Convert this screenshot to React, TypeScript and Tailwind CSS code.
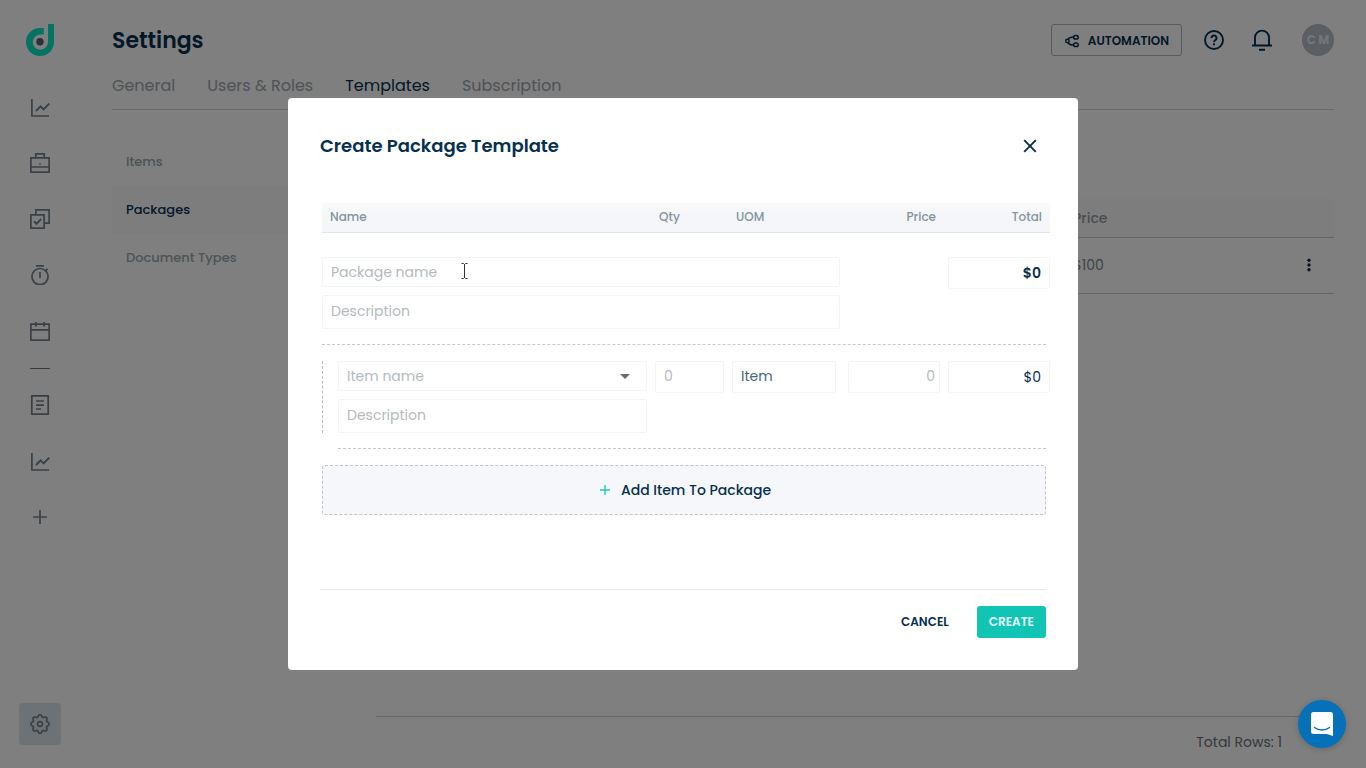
import React from "react";

const navIcon = "h-5 w-5 shrink-0";

function Icon({ children, className = navIcon, stroke = 1.7 }: { children: React.ReactNode; className?: string; stroke?: number }) {
  return (
    <svg viewBox="0 0 20 20" className={className} fill="none" stroke="currentColor" strokeWidth={stroke} aria-hidden="true">
      {children}
    </svg>
  );
}

const ChartIcon = () => (
  <Icon>
    <path d="M1.900 2v17H19" />
    <path d="M6 14 10.600 9.400l3 3 5.600-5.800" strokeWidth="2" />
  </Icon>
);

const BriefcaseIcon = () => (
  <Icon>
    <path d="M.9 4.900h18.200v14.200H.9zM5.800 4.900v-4h8.400v4M.9 14h18.200" />
    <path d="M9.200 11h1.600" />
  </Icon>
);

const TasksIcon = () => (
  <Icon>
    <path d="M.9 5.900h13.200v13.200H.9z" />
    <path d="M5.900 5.900v-5h13.200v13.200h-5" />
    <path d="m4 12.300 2.600 2.600 4.600-5" strokeWidth="2" />
  </Icon>
);

const TimerIcon = () => (
  <Icon>
    <circle cx="10" cy="11.600" r="8.100" />
    <path d="M6 .9h8M10 7v6M15.800 5.600l1.800-1.800" />
  </Icon>
);

const CalendarIcon = () => (
  <Icon>
    <path d="M.9 3.200h18.200v15.900H.9zM.9 8.900h18.200M5.900 1v4.600M14.100 1v4.600" />
  </Icon>
);

const DocumentIcon = () => (
  <Icon>
    <path d="M1.800.9h16.400v18.200H1.800zM6 6h8M6 10.200h8M6 14h5" />
  </Icon>
);

const PlusIcon = () => (
  <Icon>
    <path d="M10 3v14M3 10h14" />
  </Icon>
);

function cogPath() {
  const points: string[] = [];
  for (let i = 0; i < 72; i++) {
    const a = (i / 72) * Math.PI * 2;
    const r = 8.2 + 0.95 * Math.tanh(2.2 * Math.cos(8 * a));
    points.push(`${(10 + r * Math.sin(a)).toFixed(2)} ${(10 - r * Math.cos(a)).toFixed(2)}`);
  }
  return `M${points.join("L")}Z`;
}

const CogIcon = () => (
  <Icon>
    <path d={cogPath()} strokeLinejoin="round" />
    <circle cx="10" cy="10" r="2.400" />
  </Icon>
);

const nav = [
  { label: "Dashboard", icon: <ChartIcon /> },
  { label: "Jobs", icon: <BriefcaseIcon /> },
  { label: "Tasks", icon: <TasksIcon /> },
  { label: "Time", icon: <TimerIcon /> },
  { label: "Calendar", icon: <CalendarIcon /> },
];

const navExtra = [
  { label: "Documents", icon: <DocumentIcon /> },
  { label: "Reports", icon: <ChartIcon /> },
  { label: "Add", icon: <PlusIcon /> },
];

function Sidebar() {
  return (
    <aside className="flex w-20 shrink-0 flex-col items-center pt-6 pb-[23px] text-[#74828c]">
      <a href="#home" aria-label="Home">
        <svg viewBox="0 0 28 32" className="h-8 w-7" aria-hidden="true">
          <path d="M22 0h6v18a14 14 0 1 1-14-14h3.800v6.500H14A7.600 7.600 0 1 0 22 18z" fill="#08e6c2" />
          <circle cx="14" cy="17.800" r="3.700" fill="#4d6276" />
        </svg>
      </a>
      <nav className="mt-[41px] flex flex-col items-center gap-9">
        {nav.map((n) => (
          <a key={n.label} href="#nav" aria-label={n.label}>{n.icon}</a>
        ))}
      </nav>
      <div className="mt-[27px] h-px w-5 bg-[#6c7780]" />
      <nav className="mt-[26px] flex flex-col items-center gap-9">
        {navExtra.map((n) => (
          <a key={n.label} href="#nav" aria-label={n.label}>{n.icon}</a>
        ))}
      </nav>
      <a href="#settings" aria-label="Settings" className="mt-auto flex h-[42px] w-[42px] items-center justify-center rounded bg-[#dfe4e9]">
        <CogIcon />
      </a>
    </aside>
  );
}

const tabs = ["General", "Users & Roles", "Templates", "Subscription"];
const sections = ["Items", "Packages", "Document Types"];

function Page() {
  return (
    <div className="flex min-h-screen bg-white text-[#06304f]">
      <Sidebar />
      <div className="flex min-w-0 flex-1 flex-col pr-8 pl-8">
        <header className="flex h-[72px] items-center pt-2">
          <h1 className="flex-1 text-[22px] font-semibold">Settings</h1>
          <button type="button" className="flex h-8 items-center gap-2 rounded-[3px] border border-[#b0b5b9] px-3 pt-px text-[12px] font-semibold">
            <svg viewBox="0 0 16 16" className="h-4 w-4" fill="none" stroke="currentColor" strokeWidth="1.500" aria-hidden="true">
              <circle cx="3.400" cy="8" r="1.700" />
              <rect x="9.600" y="2.400" width="4.600" height="3.600" rx="1.800" />
              <rect x="9.600" y="10" width="4.600" height="3.600" rx="1.800" />
              <path d="M4.200 6.400C5 4.600 6.400 4 9.600 4M4.200 9.600C5 11.400 6.400 12 9.600 12" />
            </svg>
            AUTOMATION
          </button>
          <button type="button" aria-label="Help" className="ml-[22px]">
            <Icon stroke={1.9}>
              <circle cx="10" cy="10" r="9" />
              <path d="M7.500 8.100a2.500 2.500 0 1 1 3.700 2.100c-.8.5-1.200.9-1.200 1.800M10 13.300v1.900" />
            </Icon>
          </button>
          <button type="button" aria-label="Notifications" className="ml-7">
            <svg viewBox="0 0 20 22" className="h-[22px] w-5" fill="none" stroke="currentColor" strokeWidth="1.900" aria-hidden="true">
              <path d="M3 16.500V8.600a7 7 0 0 1 14 0v7.900M0 16.500h20M7 20.800h6" />
            </svg>
          </button>
          <div className="ml-[30px] flex h-8 w-8 items-center justify-center rounded-full bg-[#b6bdc4] text-[12px] font-bold text-[#e6ebf0]">C M</div>
        </header>
        <nav className="flex h-[38px] gap-8 border-b border-[#d0dad9] text-[16px] leading-[28px] text-[#9ca6ad]">
          {tabs.map((t) => (
            <a key={t} href="#tab" className={t === "Templates" ? "text-[#06304f]" : ""}>{t}</a>
          ))}
        </nav>
        <div className="flex flex-1">
          <nav className="w-[264px] shrink-0 pt-7 text-[13px] font-medium text-[#9ca6ad]">
            {sections.map((s) => (
              <a key={s} href="#section" className={s === "Packages" ? "flex h-12 items-center bg-[#fbfbfd] pl-[14px] text-[#06304f]" : "flex h-12 items-center pl-[14px]"}>{s}</a>
            ))}
          </nav>
          <main className="flex min-w-0 flex-1 flex-col pt-[89px]">
            <table className="w-full table-fixed border-collapse text-left text-[14px]">
              <thead>
                <tr className="h-[38px] border-b border-[#c6ccd0] bg-[#fafafc] text-[#929ba2]">
                  <th className="pt-[2px] pl-4 font-medium">Name</th>
                  <th className="w-[211px] pt-[2px] font-medium">Price</th>
                  <th className="w-[50px]" aria-label="Actions" />
                </tr>
              </thead>
              <tbody>
                <tr className="h-14 border-b border-[#c6ccd0] text-[#7b868e]">
                  <td className="pl-4">Package</td>
                  <td>$100</td>
                  <td>
                    <button type="button" aria-label="Row actions" className="ml-[17px] block text-[#06304f]">
                      <svg viewBox="0 0 16 16" className="h-4 w-4" fill="currentColor" aria-hidden="true">
                        <circle cx="8" cy="3.200" r="1.700" />
                        <circle cx="8" cy="8" r="1.700" />
                        <circle cx="8" cy="12.800" r="1.700" />
                      </svg>
                    </button>
                  </td>
                </tr>
              </tbody>
            </table>
            <footer className="mt-auto flex h-[52px] items-center justify-end border-t border-[#cfcfcf] pr-[52px] text-[14px] text-[#68727a]">Total Rows: 1</footer>
          </main>
        </div>
      </div>
    </div>
  );
}

const field = "block w-full rounded-[2px] border border-[#f3f4f5] bg-white px-2 text-[14px] placeholder:text-[#b4babe] focus:outline-none";
const cols = "grid grid-cols-[minmax(0,1fr)_69px_104px_96px_102px] items-start gap-x-2";

function PackageDialog() {
  return (
    <div role="dialog" aria-labelledby="dialog-title" className="w-[790px] max-w-full rounded-[4px] bg-white px-8 pt-8 pb-8 text-[#06304f]">
      <div className="flex h-8 items-center justify-between pr-[9px]">
        <h2 id="dialog-title" className="pb-[2px] text-[18px] font-semibold">Create Package Template</h2>
        <button type="button" aria-label="Close">
          <svg viewBox="0 0 14 14" className="h-[14px] w-[14px]" fill="none" stroke="currentColor" strokeWidth="1.900" aria-hidden="true">
            <path d="m1.200 1.200 11.600 11.600M12.800 1.200 1.200 12.800" />
          </svg>
        </button>
      </div>

      <form className="mt-[41px] pl-[2px]" onSubmit={(e) => e.preventDefault()}>
        <div className={`${cols} -mr-1 h-[30px] border-b border-[#e3e6e9] bg-gradient-to-b from-[#fafafa] to-[#f4f6f9] to-40% text-[12px] leading-[28px] font-medium text-[#84949d]`}>
          <span className="pl-2">Name</span>
          <span className="pl-1">Qty</span>
          <span className="pl-1">UOM</span>
          <span className="pr-1 text-right">Price</span>
          <span className="pr-2 text-right">Total</span>
        </div>

        <div className="mt-6 -mr-1 flex items-start justify-between">
          <div className="flex w-[518px] flex-col gap-2">
            <div className="relative">
              <input aria-label="Package name" placeholder="Package name" className={`${field} h-[30px]`} />
              <svg viewBox="0 0 7 16" className="pointer-events-none absolute top-[6px] left-[139px] h-4 w-[7px]" fill="none" stroke="#333" aria-hidden="true">
                <path d="M.5.5h2l1 1 1-1h2M3.500 1v14M.5 15.500h2l1-1 1 1h2" />
              </svg>
            </div>
            <input aria-label="Package description" placeholder="Description" className={`${field} h-[34px] pb-[2px]`} />
          </div>
          <output aria-label="Package total" className="h-8 w-[102px] rounded-[2px] border border-[#f3f4f5] px-2 text-right text-[14px] leading-[30px] font-semibold">$0</output>
        </div>

        <div className="mt-[15px] border-t border-dashed border-[#c9c9c9]" />

        <div className={`${cols} mt-4 -mr-1 border-l border-dashed border-[#b9b9b9] pl-[15px]`}>
          <div className="flex flex-col gap-2">
            <div className="relative">
              <select aria-label="Item name" defaultValue="" className={`${field} h-[30px] appearance-none text-[#b4babe]`}>
                <option value="">Item name</option>
              </select>
              <svg viewBox="0 0 10 5" className="pointer-events-none absolute top-[13px] right-[17px] h-[5px] w-[10px]" aria-hidden="true">
                <path d="M0 0h10L5 5z" fill="#6b6b6b" />
              </svg>
            </div>
            <input aria-label="Item description" placeholder="Description" className={`${field} h-[34px] pb-[2px]`} />
          </div>
          <input aria-label="Quantity" placeholder="0" className={`${field} h-8 pb-[2px]`} />
          <input aria-label="Unit of measure" defaultValue="Item" className={`${field} h-8 pb-[2px] text-[#4a6478]`} />
          <div className="pl-1">
            <input aria-label="Price" placeholder="0" className={`${field} h-8 pr-1 pb-[2px] text-right`} />
          </div>
          <output aria-label="Item total" className="h-8 rounded-[2px] border border-[#f3f4f5] px-2 text-right text-[14px] leading-[30px]">$0</output>
        </div>

        <div className="mt-[15px] ml-4 border-t border-dashed border-[#c9c9c9]" />

        <button type="button" className="mt-4 flex h-[50px] w-full items-center justify-center gap-[11px] rounded-[3px] border border-dashed border-[#c4c4c4] bg-[#f6f7fb] pl-[3px] text-[14px] font-medium">
          <svg viewBox="0 0 10 10" className="h-[10px] w-[10px]" fill="none" stroke="#1fc7b6" strokeWidth="1.300" aria-hidden="true">
            <path d="M5 0v10M0 5h10" />
          </svg>
          Add Item To Package
        </button>
      </form>

      <div className="mt-[74px] flex justify-end gap-4 border-t border-[#e8e8e8] pt-4">
        <button type="button" className="h-8 px-3 text-[12px] font-semibold">CANCEL</button>
        <button type="button" className="h-8 rounded-[3px] bg-[#12c4b3] px-3 text-[12px] font-semibold text-[#e4fffa]">CREATE</button>
      </div>
    </div>
  );
}

export default function App() {
  return (
    <div className="font-['Poppins','Inter',sans-serif]">
      <Page />
      <div className="fixed inset-0 flex items-center justify-center bg-black/50">
        <PackageDialog />
      </div>
      <button type="button" aria-label="Open chat" className="fixed right-5 bottom-5 flex h-12 w-12 items-center justify-center rounded-full bg-[#0571b8] shadow-[0_1px_6px_rgba(0,0,0,0.2)]">
        <svg viewBox="0 0 22 24" className="h-6 w-[22px]" aria-hidden="true">
          <path d="M2.500 0h17A2.500 2.500 0 0 1 22 2.500V24l-6-2H2.500A2.500 2.500 0 0 1 0 19.500v-17A2.500 2.500 0 0 1 2.500 0z" fill="#fff" />
          <path d="M3.500 15.500c4.200 3.300 10.800 3.300 15 0" fill="none" stroke="#0571b8" strokeWidth="1.400" strokeLinecap="round" />
        </svg>
      </button>
    </div>
  );
}
